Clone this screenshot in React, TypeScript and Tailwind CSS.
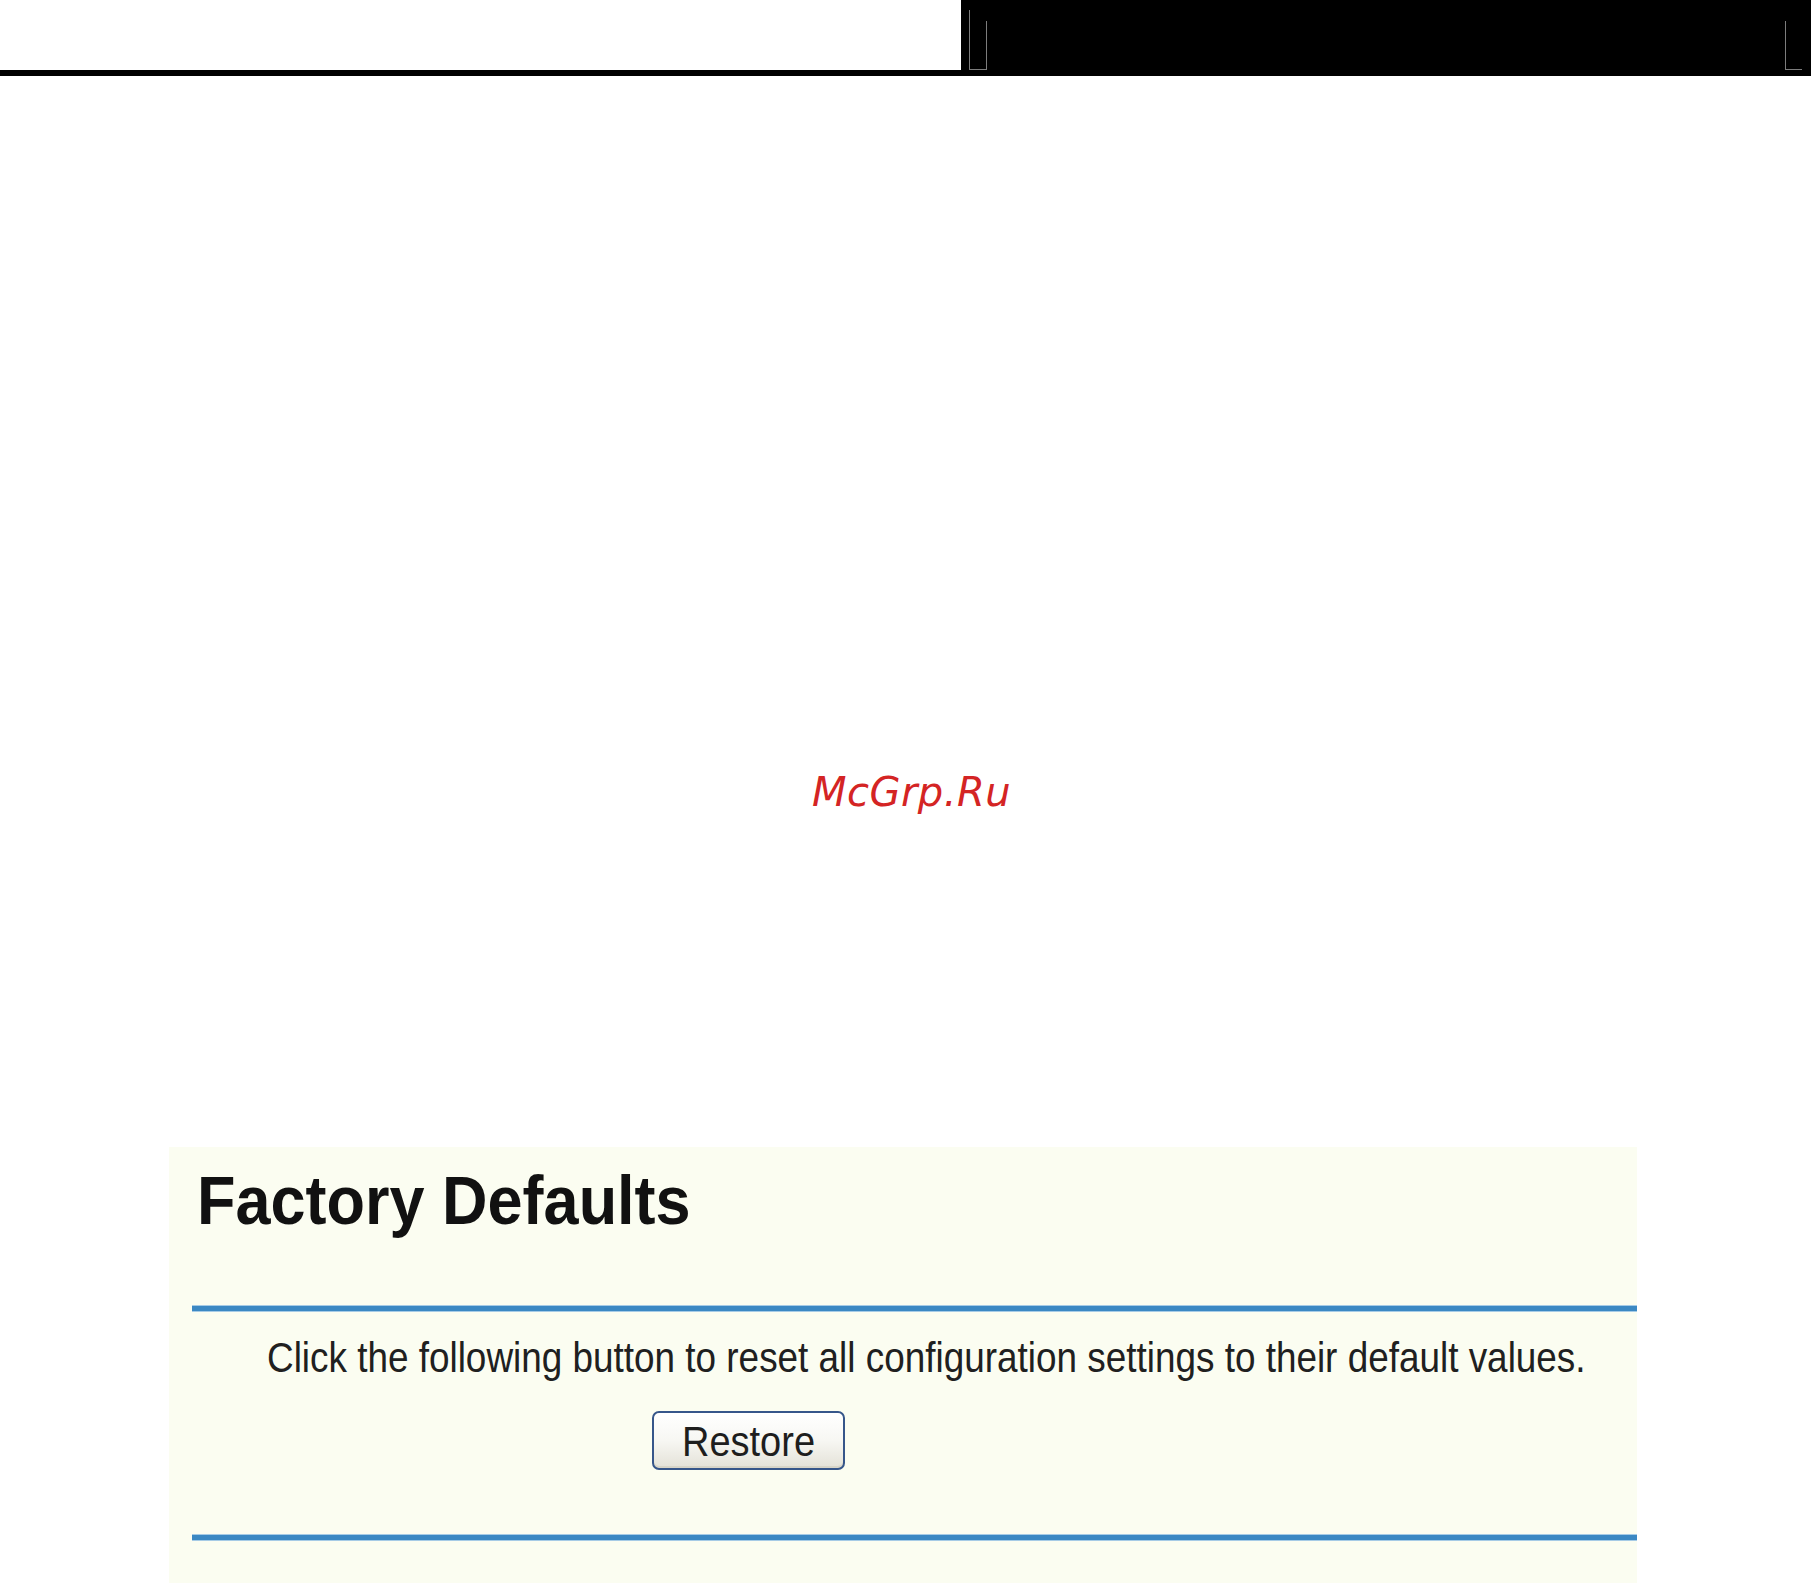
import React from "react";

function HeaderMarks() {
  // thin grey frame marks on the black header band
  return (
    <svg width="850" height="70" viewBox="0 0 850 70" className="block">
      <g stroke="#7c7c7c" strokeWidth="1" fill="none" shapeRendering="crispEdges">
        <path d="M8.5 10 V69.5 H25.5 V21" />
        <path d="M824.5 21 V69.5 H841" />
      </g>
    </svg>
  );
}

function BlueRule() {
  return <div className="h-[7px] border-y border-[#a6cbe6] bg-[#3b88c3]" />;
}

export default function App() {
  return (
    <div className="flex h-[1583px] w-[1811px] flex-col overflow-hidden bg-white">
      <header className="flex h-[70px] shrink-0">
        <div className="w-[961px] bg-white" />
        <div className="flex-1 bg-black">
          <HeaderMarks />
        </div>
      </header>
      <div className="h-[6px] shrink-0 bg-black" />

      <div className="flex h-[1071px] shrink-0 justify-center pl-[12px] pt-[696px]">
        <p
          className="text-[40px] italic leading-[40px] tracking-[0.5px] text-[#d42424]"
          style={{ fontFamily: '"DejaVu Sans", sans-serif' }}
        >
          McGrp.Ru
        </p>
      </div>

      <section
        className="ml-[169px] w-[1468px] flex-1 bg-[#fbfdf1]"
        style={{ fontFamily: '"Liberation Sans", Arial, sans-serif' }}
      >
        <h1 className="pl-[28px] pt-[24px] text-[63px] font-bold leading-[63px] text-[#111111]">
          <span className="inline-block origin-[50%_85%] scale-y-[1.08]">Factory Defaults</span>
        </h1>

        <div className="ml-[23px] mt-[71px]">
          <BlueRule />
        </div>

        <p className="mt-[29px] pl-[98px] text-[36.9px] leading-[37px] text-[#202020]">
          <span className="inline-block origin-[50%_85%] scale-y-[1.15]">
            Click the following button to reset all configuration settings to their default values.
          </span>
        </p>

        <div className="mt-[33px] pl-[483px]">
          <button
            type="button"
            className="flex h-[59px] w-[193px] items-center justify-center rounded-[7px] border-2 border-[#36568a] bg-gradient-to-b from-white via-[#f7f7f3] to-[#e4e2d8] text-[38px] leading-none text-[#1e1e1e] shadow-[inset_0_-2px_0_#d8d5c8]"
          >
            <span className="inline-block origin-center scale-y-[1.12]">Restore</span>
          </button>
        </div>

        <div className="ml-[23px] mt-[64px]">
          <BlueRule />
        </div>
      </section>
    </div>
  );
}
